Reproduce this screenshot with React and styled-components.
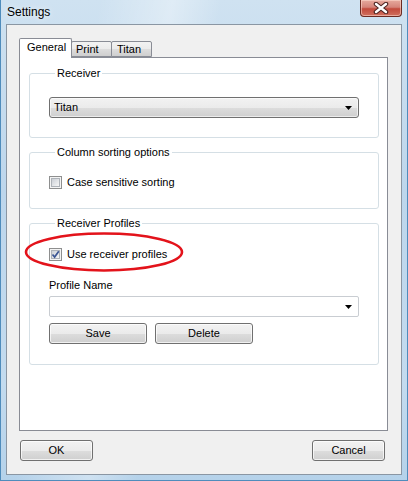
import React from "react";
import styled, { createGlobalStyle } from "styled-components";

const GlobalStyle = createGlobalStyle`
  html, body {
    margin: 0;
    padding: 0;
    background: #c7dcee;
  }
  body {
    font-family: "Liberation Sans", Arial, sans-serif;
    font-size: 11px;
    color: #000;
  }
`;

const Window = styled.div`
  width: 408px;
  height: 481px;
  box-sizing: border-box;
  display: flex;
  flex-direction: column;
  border: 1px solid #4f8cbc;
  border-top: none;
  background:
    linear-gradient(100deg, rgba(255, 255, 255, 0) 20%, rgba(255, 255, 255, 0.35) 35%, rgba(255, 255, 255, 0) 45%),
    linear-gradient(180deg, #cfe2f1 0%, #bdd6ec 40%, #c3dbef 80%, #b5d2ea 100%);
`;

const TitleBar = styled.div`
  height: 24px;
  flex: none;
  display: flex;
  align-items: flex-start;
  padding-left: 6px;
`;

const Title = styled.span`
  font-size: 12px;
  line-height: 12px;
  margin-top: 6px;
  color: #000;
  text-shadow: 0 0 6px rgba(255, 255, 255, 0.9);
`;

const CloseButton = styled.div`
  margin-left: auto;
  margin-right: 5px;
  width: 42px;
  height: 17px;
  box-sizing: border-box;
  border: 1px solid #6b2a22;
  border-top: none;
  border-radius: 0 0 4px 4px;
  background: linear-gradient(180deg, #e6aa9e 0%, #d5847a 45%, #c24a3c 55%, #d0705f 100%);
  box-shadow: inset 0 0 0 1px rgba(255, 220, 210, 0.55);
  display: flex;
  align-items: center;
  justify-content: center;
`;

const Client = styled.div`
  flex: 1;
  margin: 0 5px 6px 5px;
  background: #f0f0f0;
  border: 1px solid #8a96a3;
  display: flex;
  flex-direction: column;
  padding: 13px 13px 13px 12px;
`;

const TabStrip = styled.div`
  display: flex;
  align-items: flex-end;
  height: 19px;
  position: relative;
  z-index: 1;
`;

const Tab = styled.div`
  box-sizing: border-box;
  height: ${(p) => (p.$active ? "20px" : "16px")};
  width: ${(p) => p.$width}px;
  margin-bottom: ${(p) => (p.$active ? "-1px" : "0")};
  margin-left: ${(p) => (p.$gap ? "-1px" : "0")};
  border: 1px solid #898c95;
  border-bottom: ${(p) => (p.$active ? "none" : "1px solid #898c95")};
  background: ${(p) =>
    p.$active ? "#fff" : "linear-gradient(180deg, #f2f2f2 0%, #ebebeb 50%, #dddddd 51%, #cfcfcf 100%)"};
  padding-left: ${(p) => p.$pad}px;
  line-height: ${(p) => (p.$active ? "17px" : "15px")};
  border-radius: 2px 2px 0 0;
`;

const Panel = styled.div`
  height: 374px;
  box-sizing: border-box;
  background: #fff;
  border: 1px solid #898c95;
  padding: 9px 8px 0 9px;
  display: flex;
  flex-direction: column;
  gap: 8px;
`;

const Group = styled.fieldset`
  margin: 0;
  border: 1px solid #d5dfe5;
  border-radius: 3px;
  padding: ${(p) => p.$pt}px 19px ${(p) => p.$pb}px 19px;
  min-width: 0;
  position: relative;
`;

const Legend = styled.legend`
  padding: 0 2px;
  margin-left: 6px;
  line-height: 13px;
  font-size: 11px;
`;

const ComboBox = styled.div`
  height: 21px;
  box-sizing: border-box;
  border: 1px solid ${(p) => (p.$editable ? "#c9cdd2" : "#707070")};
  border-radius: ${(p) => (p.$editable ? "2px" : "3px")};
  background: ${(p) =>
    p.$editable ? "#fff" : "linear-gradient(180deg, #f2f2f2 0%, #ebebeb 50%, #dddddd 51%, #cfcfcf 100%)"};
  box-shadow: ${(p) => (p.$editable ? "none" : "inset 0 0 0 1px rgba(255,255,255,0.6)")};
  display: flex;
  align-items: center;
  padding: 0 4px 0 4px;
  margin-top: ${(p) => p.$mt || 0}px;
  line-height: 13px;
`;

const ComboText = styled.span`
  flex: 1;
`;

const Arrow = styled.svg`
  width: 7px;
  height: 4px;
  margin-right: 2px;
`;

const CheckRow = styled.div`
  display: flex;
  align-items: center;
  gap: 5px;
  height: 13px;
  line-height: 13px;
  position: relative;
`;

const CheckBox = styled.span`
  width: 13px;
  height: 13px;
  box-sizing: border-box;
  border: 1px solid #8e8f8f;
  background: #f4f4f4;
  padding: 1px;
  display: flex;
`;

const CheckInner = styled.span`
  flex: 1;
  border: 1px solid #aeb3b9;
  background: linear-gradient(135deg, #cbcfd5 0%, #e3e5e8 55%, #f6f6f6 100%);
  position: relative;
  display: flex;
  align-items: center;
  justify-content: center;
`;

const CheckMark = styled.svg`
  position: absolute;
  left: -1px;
  top: -1px;
  width: 9px;
  height: 9px;
`;

const Highlight = styled.svg`
  position: absolute;
  left: -25px;
  top: -16px;
  width: 164px;
  height: 42px;
  overflow: visible;
  pointer-events: none;
`;

const FieldLabel = styled.div`
  line-height: 13px;
  margin-top: 18px;
`;

const ButtonRow = styled.div`
  display: flex;
  gap: ${(p) => p.$gap || 0}px;
  justify-content: ${(p) => (p.$spread ? "space-between" : "flex-start")};
  margin-top: ${(p) => p.$mt || 0}px;
  padding: ${(p) => p.$pad || "0"};
`;

const Button = styled.div`
  width: ${(p) => p.$width}px;
  height: 21px;
  box-sizing: border-box;
  border: 1px solid #707070;
  border-radius: 3px;
  background: linear-gradient(180deg, #f2f2f2 0%, #ebebeb 50%, #dddddd 51%, #cfcfcf 100%);
  box-shadow: inset 0 0 0 1px rgba(255, 255, 255, 0.7);
  display: flex;
  align-items: center;
  justify-content: center;
  line-height: 13px;
`;

const DownArrow = () => (
  <Arrow viewBox="0 0 7 4">
    <path d="M0 0 H7 L3.5 4 Z" fill="#000" />
  </Arrow>
);

const Check = ({ checked }) => (
  <CheckBox>
    <CheckInner>
      {checked && (
        <CheckMark viewBox="0 0 9 9">
          <path d="M1.5 4.5 L3.6 7 L7.8 1.2" fill="none" stroke="#3b5593" strokeWidth="1.7" />
        </CheckMark>
      )}
    </CheckInner>
  </CheckBox>
);

export default function App() {
  return (
    <>
      <GlobalStyle />
      <Window>
        <TitleBar>
          <Title>Settings</Title>
          <CloseButton>
            <svg width="18" height="12" viewBox="0 0 18 12">
              <path d="M4 2 L14 10 M14 2 L4 10" stroke="#4b2320" strokeWidth="4.5" strokeLinecap="round" />
              <path d="M4 2 L14 10 M14 2 L4 10" stroke="#fff" strokeWidth="2.4" strokeLinecap="round" />
            </svg>
          </CloseButton>
        </TitleBar>
        <Client>
          <TabStrip>
            <Tab $active $width={53} $pad={7}>General</Tab>
            <Tab $width={41} $pad={4} $gap>Print</Tab>
            <Tab $width={41} $pad={5} $gap>Titan</Tab>
          </TabStrip>
          <Panel>
            <Group $pt={17} $pb={19}>
              <Legend>Receiver</Legend>
              <ComboBox>
                <ComboText>Titan</ComboText>
                <DownArrow />
              </ComboBox>
            </Group>
            <Group $pt={17} $pb={19}>
              <Legend>Column sorting options</Legend>
              <CheckRow>
                <Check />
                <span>Case sensitive sorting</span>
              </CheckRow>
            </Group>
            <Group $pt={18} $pb={20}>
              <Legend>Receiver Profiles</Legend>
              <CheckRow>
                <Check checked />
                <span>Use receiver profiles</span>
                <Highlight viewBox="0 0 164 42">
                  <ellipse cx="80" cy="20" rx="78" ry="18.5" fill="none" stroke="#e3131b" strokeWidth="2.6" />
                </Highlight>
              </CheckRow>
              <FieldLabel>Profile Name</FieldLabel>
              <ComboBox $editable $mt={4}>
                <ComboText />
                <DownArrow />
              </ComboBox>
              <ButtonRow $gap={8} $mt={6}>
                <Button $width={98}>Save</Button>
                <Button $width={98}>Delete</Button>
              </ButtonRow>
            </Group>
          </Panel>
          <ButtonRow $spread $mt={9} $pad="0 3px 0 1px">
            <Button $width={73}>OK</Button>
            <Button $width={73}>Cancel</Button>
          </ButtonRow>
        </Client>
      </Window>
    </>
  );
}
